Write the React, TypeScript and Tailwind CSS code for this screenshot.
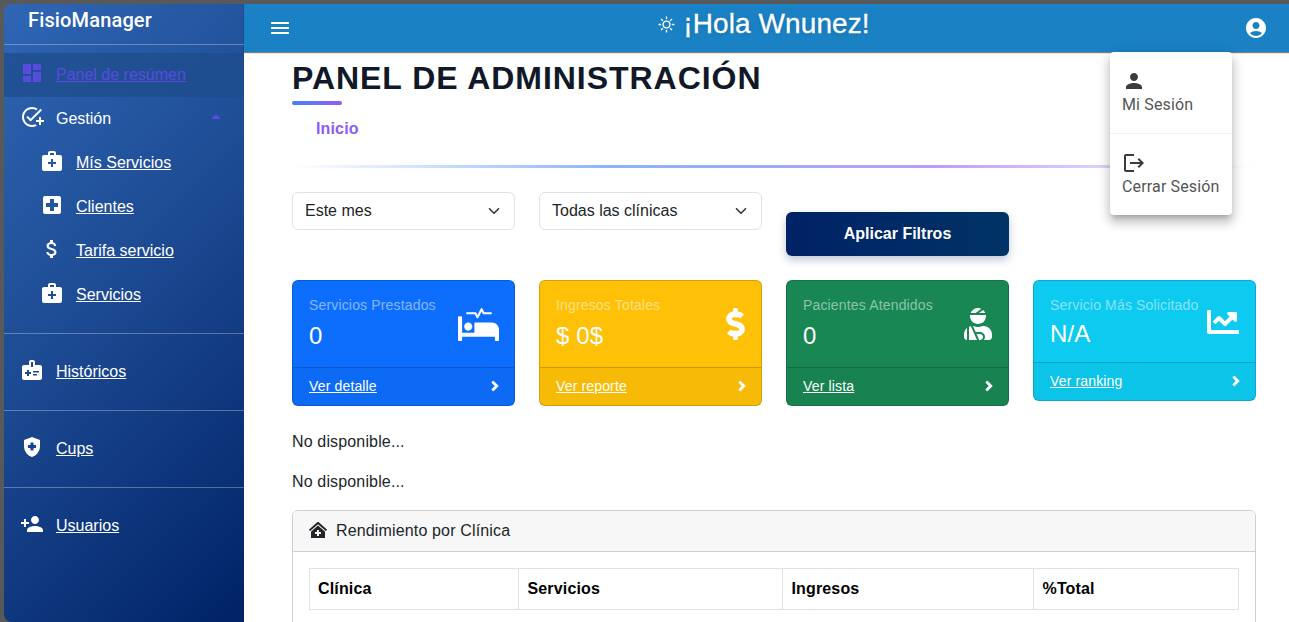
import type { ReactNode } from "react";
import type { IconType } from "react-icons";
import {
  MdAccountCircle,
  MdAddTask,
  MdArrowDropUp,
  MdAttachMoney,
  MdDashboard,
  MdHealthAndSafety,
  MdLocalHospital,
  MdLogout,
  MdMedicalInformation,
  MdMedicalServices,
  MdMenu,
  MdPerson,
  MdPersonAdd,
} from "react-icons/md";
import {
  FaAngleRight,
  FaChartLine,
  FaClinicMedical,
  FaDollarSign,
  FaProcedures,
  FaUserInjured,
} from "react-icons/fa";

function NavItem({ icon: Icon, label, nested = false }: { icon: IconType; label: string; nested?: boolean }) {
  return (
    <li className={`flex h-11 items-center gap-3 ${nested ? "pl-9" : "pl-4"}`}>
      <Icon className="size-6 shrink-0 -translate-y-0.5" />
      <a className="underline">{label}</a>
    </li>
  );
}

function Divider() {
  return <hr className="my-4 border-t border-white/30" />;
}

function Sidebar() {
  return (
    <nav className="flex w-60 shrink-0 flex-col rounded-l-[8px] bg-[linear-gradient(135deg,#2f66b5_0%,#1d4b93_45%,#002266_100%)] text-base text-white">
      <div className="flex h-10 items-start pl-6 pt-[3px] font-['Roboto',sans-serif] text-xl leading-[27px] font-medium tracking-[0.15px]">
        FisioManager
      </div>
      <hr className="border-t border-white/30" />
      <ul className="pt-2">
        <li className="flex h-11 items-center gap-3 bg-[#1e4b8a]/70 pl-4 text-[#5a4be0]">
          <MdDashboard className="size-6 -translate-y-0.5" />
          <a className="underline">Panel de resúmen</a>
        </li>
        <li className="flex h-11 items-center gap-3 pr-4 pl-4">
          <MdAddTask className="size-6 -translate-y-0.5" />
          <span className="flex-1">Gestión</span>
          <MdArrowDropUp className="size-6 -translate-y-0.5 text-[#5a4be0]" />
        </li>
        <NavItem nested icon={MdMedicalServices} label="Mís Servicios" />
        <NavItem nested icon={MdLocalHospital} label="Clientes" />
        <NavItem nested icon={MdAttachMoney} label="Tarifa servicio" />
        <NavItem nested icon={MdMedicalServices} label="Servicios" />
        <Divider />
        <NavItem icon={MdMedicalInformation} label="Históricos" />
        <Divider />
        <NavItem icon={MdHealthAndSafety} label="Cups" />
        <Divider />
        <NavItem icon={MdPersonAdd} label="Usuarios" />
      </ul>
    </nav>
  );
}

function Sun() {
  return (
    <svg viewBox="0 0 18 18" className="size-[17px]" fill="none" stroke="currentColor" strokeWidth="1.4">
      <circle cx="9" cy="9" r="3.6" />
      <path d="M9 .6v2.8M9 14.6v2.8M.6 9h2.8M14.6 9h2.8M3.2 3.2l1.9 1.9M12.9 12.9l1.9 1.9M3.2 14.8l1.9-1.9M12.9 5.1l1.9-1.9" />
    </svg>
  );
}

function SessionMenu() {
  return (
    <div className="absolute top-12 right-[57px] z-10 w-[122px] rounded-[4px] bg-white font-['Roboto',sans-serif] text-base tracking-[0.15px] text-[#555] shadow-[0_5px_5px_-3px_rgba(0,0,0,.2),0_8px_10px_1px_rgba(0,0,0,.14),0_3px_14px_2px_rgba(0,0,0,.12)]">
      <div className="h-[82px] border-b border-[#f3f3f3] pt-[17px] pl-3">
        <MdPerson className="size-6 text-[#3c3c3c]" />
        <div className="leading-6 whitespace-nowrap">Mi Sesión</div>
      </div>
      <div className="h-[81px] pt-[17px] pl-3">
        <MdLogout className="size-6 text-[#3c3c3c]" />
        <div className="leading-6 whitespace-nowrap">Cerrar Sesión</div>
      </div>
    </div>
  );
}

function Header() {
  return (
    <header className="relative flex h-12 shrink-0 items-center justify-between bg-[#1a82c4] px-[21px] text-white shadow-[0_1px_1px_rgba(0,0,0,.5)]">
      <MdMenu className="ml-[3px] size-6" />
      <div className="-ml-2 flex -translate-y-1 items-center gap-2 text-[28px] leading-8 tracking-[0.1px] [text-shadow:0_1px_4px_rgba(0,0,0,.15)]">
        <Sun />
        <span className="[-webkit-text-stroke:0.3px_white]">¡Hola Wnunez!</span>
      </div>
      <MdAccountCircle className="size-6" />
      <SessionMenu />
    </header>
  );
}

function Select({ value }: { value: string }) {
  return (
    <div className="flex h-[38px] items-center justify-between rounded-md border border-[#dee2e6] px-3 tracking-normal text-[#212529]">
      <span>{value}</span>
      <svg viewBox="0 0 16 16" className="mr-0.5 size-3" fill="none" stroke="#343a40" strokeWidth="2.2" strokeLinecap="round" strokeLinejoin="round">
        <path d="m2 5 6 6 6-6" />
      </svg>
    </div>
  );
}

function StatCard({
  title,
  value,
  link,
  color,
  icon,
  compact = false,
}: {
  title: string;
  value: string;
  link: string;
  color: string;
  icon: ReactNode;
  compact?: boolean;
}) {
  return (
    <div className={`flex flex-col rounded-md border border-black/17 text-white ${color}`}>
      <div className={`flex items-center justify-between px-4 ${compact ? "h-[81px]" : "h-[86px]"}`}>
        <div className="self-start pt-4">
          <div className="text-sm leading-[17px] tracking-[0.16px] whitespace-nowrap text-white/50">{title}</div>
          <div className={`text-2xl leading-[29px] ${compact ? "pt-[5px]" : "pt-[7px]"}`}>{value}</div>
        </div>
        {icon}
      </div>
      <div className="flex h-[38px] items-center justify-between border-t border-black/17 bg-black/3 px-4 pb-0.5 text-sm">
        <a className="underline">{link}</a>
        <FaAngleRight className="-mr-px h-4 w-2" stroke="currentColor" strokeWidth="14" />
      </div>
    </div>
  );
}

export default function App() {
  return (
    <div className="flex h-[622px] overflow-hidden bg-[#58595b] pt-1 pl-1 font-['Liberation_Sans',Arial,sans-serif] text-base">
      <Sidebar />
      <div className="flex min-w-0 flex-1 flex-col bg-white">
        <Header />
        <main className="flex flex-col pr-[33px] pl-12 tracking-[0.15px] text-[#212529]">
          <h1 className="pt-[7px] text-[32px] leading-[38px] font-bold tracking-[0.96px] text-[#111827]">
            PANEL DE ADMINISTRACIÓN
          </h1>
          <div className="mt-1 h-1 w-[50px] rounded-sm bg-linear-to-r from-[#3b82f6] to-[#8b5cf6]" />
          <div className="mt-3 pl-6 leading-6 font-bold text-[#8b5cf6]">Inicio</div>
          <div className="mt-6 h-[3px] bg-[linear-gradient(90deg,transparent,#3b82f6,#8b5cf6,transparent)] opacity-60" />
          <div className="mt-6 grid grid-cols-4 gap-x-6">
            <Select value="Este mes" />
            <Select value="Todas las clínicas" />
            <button className="mt-5 h-11 rounded-md bg-[linear-gradient(90deg,#002266,#003366)] font-bold tracking-normal text-white shadow-[0_4px_8px_rgba(0,34,102,.25)]">
              Aplicar Filtros
            </button>
          </div>
          <div className="mt-6 grid grid-cols-4 items-start gap-x-6">
            <StatCard title="Servicios Prestados" value="0" link="Ver detalle" color="bg-[#0d6efd]" icon={<FaProcedures className="-mr-px h-[33px] w-[41px]" />} />
            <StatCard title="Ingresos Totales" value="$ 0$" link="Ver reporte" color="bg-[#ffc107]" icon={<FaDollarSign className="h-8 w-[19px]" stroke="currentColor" strokeWidth="12" />} />
            <StatCard title="Pacientes Atendidos" value="0" link="Ver lista" color="bg-[#198754]" icon={<FaUserInjured className="h-8 w-7" />} />
            <StatCard compact title="Servicio Más Solicitado" value="N/A" link="Ver ranking" color="bg-[#0dcaf0]" icon={<FaChartLine className="-ml-4 size-8 shrink-0" />} />
          </div>
          <p className="mt-6 leading-6">No disponible...</p>
          <p className="mt-4 leading-6">No disponible...</p>
          <section className="mt-4 h-[160px] overflow-hidden rounded-md border border-[#cfcfcf]">
            <div className="flex h-[41px] items-center gap-[9px] border-b border-[#cfcfcf] bg-[#f7f7f7] px-4">
              <FaClinicMedical className="h-4 w-[18px] -translate-y-px" />
              <span>Rendimiento por Clínica</span>
            </div>
            <div className="p-4">
              <table className="w-full table-fixed border-collapse text-left text-black">
                <thead>
                  <tr className="h-[41px]">
                    <th className="w-[209px] border border-[#dee2e6] px-2">Clínica</th>
                    <th className="w-[264px] border border-[#dee2e6] px-[8.5px]">Servicios</th>
                    <th className="w-[251px] border border-[#dee2e6] px-[8.5px]">Ingresos</th>
                    <th className="border border-[#dee2e6] px-[8.5px]">%Total</th>
                  </tr>
                </thead>
              </table>
            </div>
          </section>
        </main>
      </div>
    </div>
  );
}
